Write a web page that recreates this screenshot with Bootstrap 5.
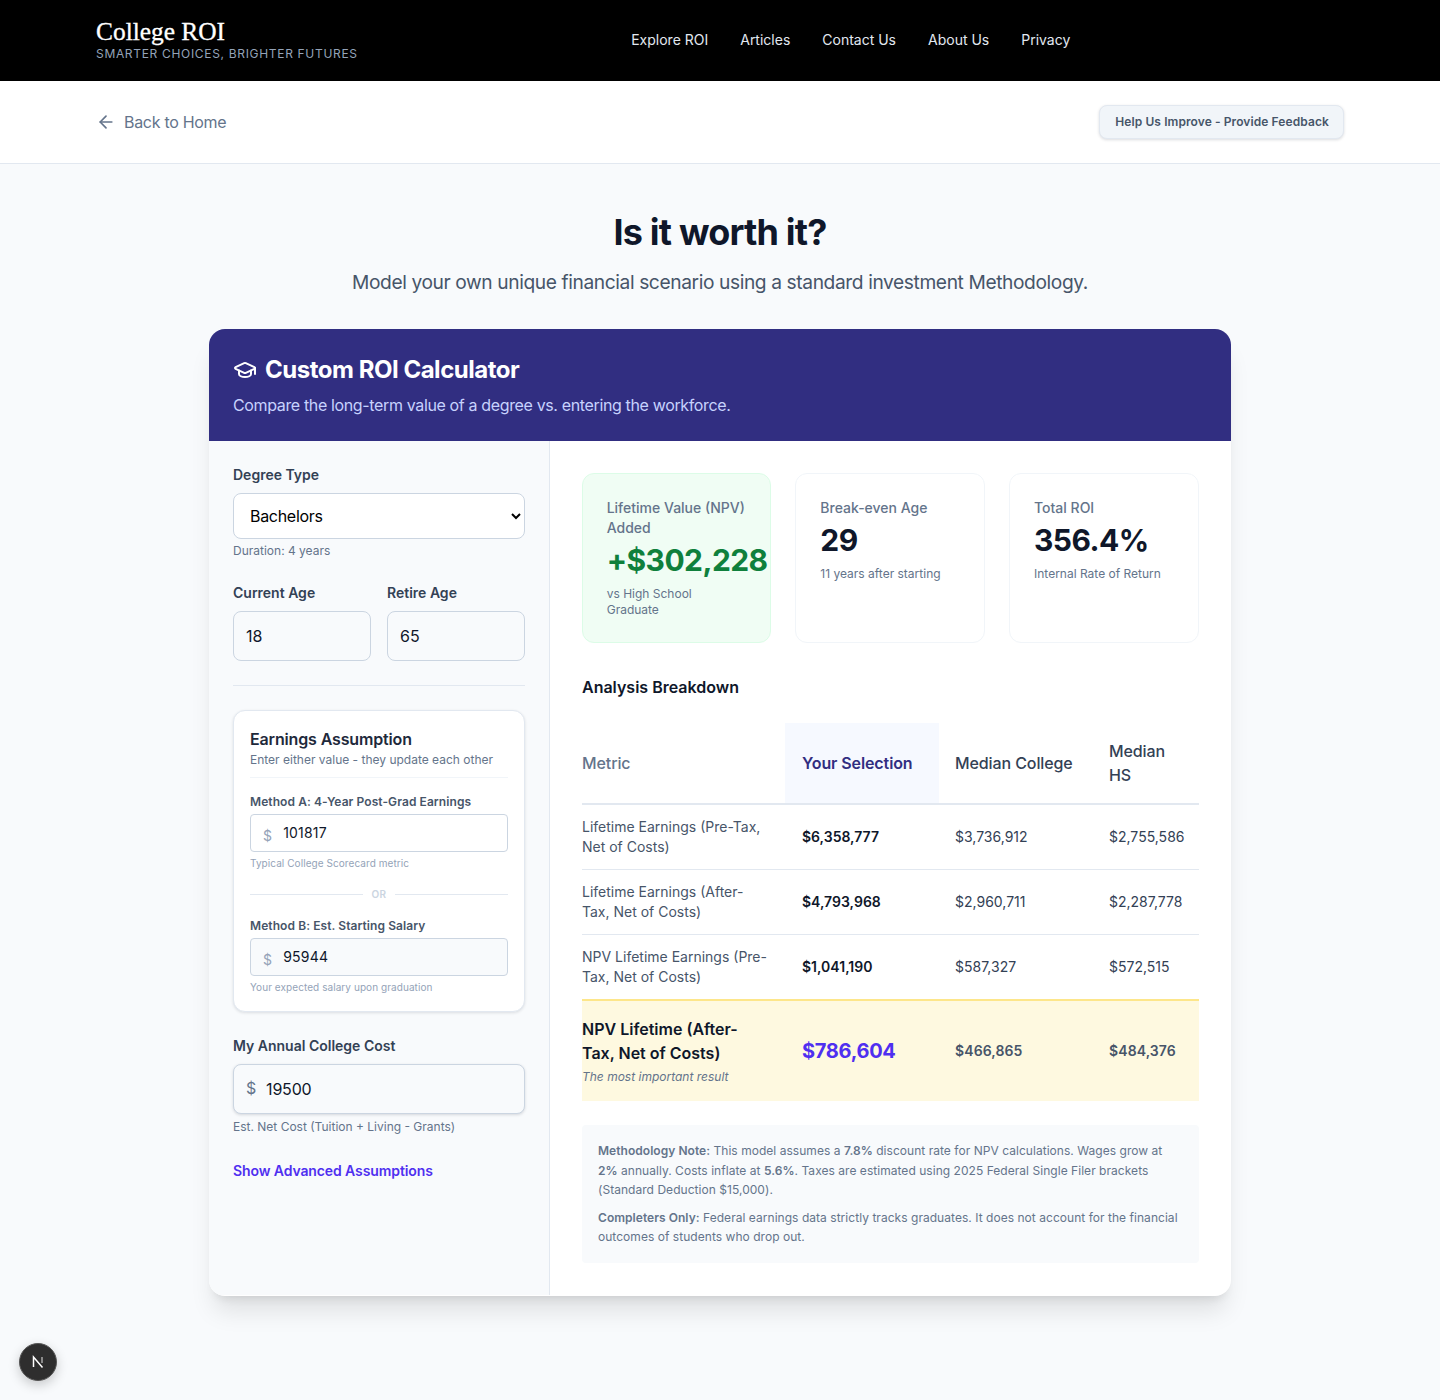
<!DOCTYPE html>
<html lang="en">
<head>
<meta charset="utf-8">
<title>College ROI</title>
<meta name="viewport" content="width=device-width, initial-scale=1">
<link rel="stylesheet" href="https://cdn.jsdelivr.net/npm/bootstrap@5.3.2/dist/css/bootstrap.min.css">
<style>
body { font-family: Inter, "Liberation Sans", sans-serif; background: #f8fafc; color: #0f172a; min-height: 1400px; }
.top-bar { background: #000; height: 81px; padding: 0 96px 1px; }
.brand-name { font-family: "Liberation Serif", serif; font-size: 25.4px; line-height: 30px; color: #fff; font-weight: 500; -webkit-text-stroke: .3px #fff; margin-top: -3px; }
.brand-tag { font-size: 12px; line-height: 16px; letter-spacing: .68px; color: #94a3b8; }
.top-links { gap: 32px; margin-left: 273.5px; padding-bottom: 2px; }
.top-links a { color: #e2e8f0; font-size: 14px; font-weight: 400; text-decoration: none; }
.sub-bar { background: #fff; height: 83px; padding: 0 96px; border-bottom: 1px solid #e2e8f0; }
.back-link { color: #64748b; font-size: 16px; letter-spacing: -.3px; text-decoration: none; gap: 8px; }
.feedback-btn { background: #f1f5f9; color: #475569; border: 1px solid #e2e8f0; border-radius: 8px; font-size: 12px; font-weight: 600; letter-spacing: .09px; height: 34px; padding: 0 14px 0 15px; box-shadow: 0 1px 3px rgba(15,23,42,.15); }
.page-title { font-size: 36px; line-height: 40px; font-weight: 700; letter-spacing: -.8px; color: #0f172a; margin: 48px 0 0; }
.page-sub { font-size: 19.2px; line-height: 28px; letter-spacing: -.4px; color: #475569; margin: 16px 0 33px; }
.calc-card { width: 1022px; height: 967px; margin: 0 auto; background: #fff; border-radius: 16px; overflow: hidden; box-shadow: 0 20px 25px -5px rgba(0,0,0,.1), 0 8px 10px -6px rgba(0,0,0,.1); }
.calc-head { background: #312e81; height: 112px; padding: 24px; color: #fff; }
.calc-title { font-size: 24px; line-height: 32px; font-weight: 700; letter-spacing: -.48px; margin: 1px 0 7px; gap: 8px; }
.calc-desc { font-size: 16px; line-height: 24px; letter-spacing: -.36px; color: #c7d2fe; margin: 0; }
.side-col { width: 341px; background: #f8fafc; border-right: 1px solid #e2e8f0; padding: 24px; }
.main-col { width: 681px; padding: 32px; }
.fld-label { font-size: 14px; line-height: 20px; font-weight: 600; color: #334155; margin-bottom: 8px; display: block; }
.fld-hint { font-size: 12px; line-height: 16px; color: #64748b; margin-top: 4px; }
.fld-select { height: 46px; width: 100%; border: 1px solid #cbd5e1; border-radius: 8px; background: #fff; font-size: 16px; letter-spacing: -.3px; color: #000; padding: 0 12px; }
.fld-input { height: 50px; width: 100%; border: 1px solid #cbd5e1; border-radius: 8px; background: #f8fafc; font-size: 16px; color: #0f172a; padding: 0 12px; }
.side-rule { border-top: 1px solid #e2e8f0; margin: 24px 0; }
.earn-box { background: #fff; border: 1px solid #e2e8f0; border-radius: 12px; padding: 16px; box-shadow: 0 1px 3px rgba(15,23,42,.12); height: 302px; }
.earn-title { font-size: 16px; line-height: 24px; font-weight: 600; letter-spacing: -.15px; color: #1e293b; margin: 0; }
.earn-desc { font-size: 12px; line-height: 16px; color: #64748b; margin-top: 1px; padding-bottom: 9px; border-bottom: 1px solid #f1f5f9; margin-bottom: 16px; }
.earn-label { font-size: 12px; line-height: 16px; font-weight: 600; letter-spacing: .08px; color: #475569; margin-bottom: 4px; display: block; }
.money-box { height: 38px; border: 1px solid #cbd5e1; border-radius: 4px; background: #fff; padding: 0 0 2px 12px; gap: 11px; font-size: 14px; letter-spacing: .2px; color: #0f172a; }
.money-box.muted-box { background: #f8fafc; }
.money-sign { color: #94a3b8; padding-top: 6px; }
.earn-hint { font-size: 10px; line-height: 14px; letter-spacing: .07px; color: #94a3b8; margin-top: 4px; }
.or-row { gap: 8px; margin: 16px 0; font-size: 10px; line-height: 16px; font-weight: 600; letter-spacing: .5px; color: #cbd5e1; }
.or-row::before, .or-row::after { content: ""; flex: 1; border-top: 1px solid #e2e8f0; }
.cost-box { height: 50px; border: 1px solid #cbd5e1; border-radius: 8px; background: #f8fafc; padding-left: 12px; gap: 10px; font-size: 16px; letter-spacing: -.2px; color: #0f172a; box-shadow: 0 1px 3px rgba(15,23,42,.15); }
.cost-box .money-sign { color: #64748b; padding: 0 0 2px; }
.cost-hint { margin-top: 5px; }
.adv-link { color: #4f2ff0; font-size: 14px; line-height: 20px; font-weight: 600; letter-spacing: -.1px; text-decoration: none; display: block; margin-top: 26px; }
.stat-row { gap: 24px; margin: 0 .33px 0 -.33px; }
.stat-box { flex: 1 1 0; height: 170px; border: 1px solid #f1f5f9; border-radius: 12px; padding: 24px 0 0 24px; min-width: 0; }
.stat-box.good { background: #f0fdf4; border-color: #dcfce7; }
.stat-label { font-size: 14px; line-height: 20px; font-weight: 500; color: #64748b; }
.stat-value { font-size: 30px; line-height: 36px; font-weight: 700; letter-spacing: -.55px; color: #0f172a; margin-top: 4px; white-space: nowrap; }
.stat-box.good .stat-value { color: #0f803c; }
.stat-note { font-size: 12px; line-height: 16px; color: #64748b; margin-top: 8px; }
.stat-box.good .stat-note { padding-right: 40px; }
.section-head { font-size: 16px; line-height: 24px; font-weight: 600; color: #0f172a; margin: 32px 0 24px; }
.roi-table { table-layout: fixed; width: 617px; border-collapse: collapse; margin: 0; }
.roi-table th { height: 81px; padding: 0 16px 0 17px; font-size: 16px; line-height: 24px; font-weight: 500; letter-spacing: -.1px; color: #334155; border-bottom: 2px solid #e2e8f0; vertical-align: middle; }
.roi-table th:nth-child(1) { width: 203px; }
.roi-table th:nth-child(2) { width: 154px; }
.roi-table th:nth-child(3) { width: 153px; }
.roi-table th:nth-child(4) { width: 107px; }
.roi-table th:first-child, .roi-table td:first-child { padding-left: 0; }
.roi-table th:first-child { color: #64748b; }
.roi-table th.pick { background: #f6f9ff; color: #312e81; font-weight: 600; }
.roi-table td { height: 65px; padding: 0 16px 0 17px; font-size: 14px; line-height: 20px; color: #334155; border-bottom: 1px solid #e2e8f0; vertical-align: middle; }
.roi-table th:nth-child(3), .roi-table td:nth-child(3) { padding-left: 16px; }
.roi-table td:first-child { color: #475569; }
.roi-table td.pick { font-weight: 600; color: #0f172a; }
.roi-table tr.near-hero td { height: 66px; border-bottom: 0; }
.roi-table tr.hero td { height: 101px; background: #fef9e0; border-top: 2px solid #fde68a; border-bottom: 0; font-weight: 600; letter-spacing: .1px; color: #475569; }
.roi-table tr.hero td:first-child { font-size: 16px; line-height: 24px; letter-spacing: 0; color: #0f172a; padding-right: 16px; }
.roi-table tr.hero td.pick { font-size: 20px; font-weight: 700; letter-spacing: -.3px; color: #4f2ff0; }
.hero-note { display: block; font-size: 12px; line-height: 16px; font-style: italic; font-weight: 400; color: #64748b; margin-top: 4px; }
.method-note { background: #f8fafc; border-radius: 4px; padding: 16px; margin-top: 24px; font-size: 12px; line-height: 19.5px; letter-spacing: .04px; color: #64748b; }
.method-note p { margin: 0 0 8px; }
.method-note p:last-child { margin: 0; }
.method-note strong { font-weight: 600; }
.dev-badge { position: fixed; left: 19px; bottom: 19px; width: 38px; height: 38px; border-radius: 50%; background: #2e2e2e; border: 1px solid #555; box-shadow: 0 4px 12px rgba(0,0,0,.2); }
</style>
</head>
<body>
<header class="top-bar d-flex align-items-center">
  <div>
    <div class="brand-name">College ROI</div>
    <div class="brand-tag">SMARTER CHOICES, BRIGHTER FUTURES</div>
  </div>
  <nav class="top-links d-flex">
    <a href="#">Explore ROI</a>
    <a href="#">Articles</a>
    <a href="#">Contact Us</a>
    <a href="#">About Us</a>
    <a href="#">Privacy</a>
  </nav>
</header>
<div class="sub-bar d-flex align-items-center justify-content-between">
  <a class="back-link d-flex align-items-center" href="#">
    <svg width="20" height="20" viewBox="0 0 24 24" fill="none" stroke="#64748b" stroke-width="2" stroke-linecap="round" stroke-linejoin="round"><path d="M19 12H5"/><path d="M12 19l-7-7 7-7"/></svg>
    Back to Home
  </a>
  <button class="feedback-btn">Help Us Improve - Provide Feedback</button>
</div>
<main>
  <h1 class="page-title text-center">Is it worth it?</h1>
  <p class="page-sub text-center">Model your own unique financial scenario using a standard investment Methodology.</p>
  <section class="calc-card">
    <div class="calc-head">
      <h2 class="calc-title d-flex align-items-center">
        <svg width="24" height="24" viewBox="0 0 24 24" fill="none" stroke="#fff" stroke-width="2" stroke-linecap="round" stroke-linejoin="round"><path d="M21.4 10.9a1 1 0 0 0 0-1.84L12.83 5.2a2 2 0 0 0-1.66 0L2.6 9.1a1 1 0 0 0 0 1.83l8.57 3.9a2 2 0 0 0 1.66 0z"/><path d="M22 10v6"/><path d="M6 12.5V16a6 3 0 0 0 12 0v-3.5"/></svg>
        Custom ROI Calculator
      </h2>
      <p class="calc-desc">Compare the long-term value of a degree vs. entering the workforce.</p>
    </div>
    <div class="d-flex">
      <aside class="side-col">
        <label class="fld-label">Degree Type</label>
        <select class="fld-select"><option>Bachelors</option></select>
        <div class="fld-hint">Duration: 4 years</div>
        <div class="d-flex gap-3 mt-4">
          <div class="flex-fill w-50"><label class="fld-label">Current Age</label><input class="fld-input" value="18"></div>
          <div class="flex-fill w-50"><label class="fld-label">Retire Age</label><input class="fld-input" value="65"></div>
        </div>
        <div class="side-rule"></div>
        <div class="earn-box">
          <h3 class="earn-title">Earnings Assumption</h3>
          <div class="earn-desc">Enter either value - they update each other</div>
          <label class="earn-label">Method A: 4-Year Post-Grad Earnings</label>
          <div class="money-box d-flex align-items-center"><span class="money-sign">$</span><span>101817</span></div>
          <div class="earn-hint">Typical College Scorecard metric</div>
          <div class="or-row d-flex align-items-center">OR</div>
          <label class="earn-label">Method B: Est. Starting Salary</label>
          <div class="money-box muted-box d-flex align-items-center"><span class="money-sign">$</span><span>95944</span></div>
          <div class="earn-hint">Your expected salary upon graduation</div>
        </div>
        <label class="fld-label mt-4">My Annual College Cost</label>
        <div class="cost-box d-flex align-items-center"><span class="money-sign">$</span><span>19500</span></div>
        <div class="fld-hint cost-hint">Est. Net Cost (Tuition + Living - Grants)</div>
        <a class="adv-link" href="#">Show Advanced Assumptions</a>
      </aside>
      <div class="main-col">
        <div class="stat-row d-flex">
          <div class="stat-box good">
            <div class="stat-label">Lifetime Value (NPV) Added</div>
            <div class="stat-value">+$302,228</div>
            <div class="stat-note">vs High School Graduate</div>
          </div>
          <div class="stat-box">
            <div class="stat-label">Break-even Age</div>
            <div class="stat-value">29</div>
            <div class="stat-note">11 years after starting</div>
          </div>
          <div class="stat-box">
            <div class="stat-label">Total ROI</div>
            <div class="stat-value">356.4%</div>
            <div class="stat-note">Internal Rate of Return</div>
          </div>
        </div>
        <h3 class="section-head">Analysis Breakdown</h3>
        <table class="roi-table">
          <thead>
            <tr><th>Metric</th><th class="pick">Your Selection</th><th>Median College</th><th>Median HS</th></tr>
          </thead>
          <tbody>
            <tr><td>Lifetime Earnings (Pre-Tax, Net of Costs)</td><td class="pick">$6,358,777</td><td>$3,736,912</td><td>$2,755,586</td></tr>
            <tr><td>Lifetime Earnings (After-Tax, Net of Costs)</td><td class="pick">$4,793,968</td><td>$2,960,711</td><td>$2,287,778</td></tr>
            <tr class="near-hero"><td>NPV Lifetime Earnings (Pre-Tax, Net of Costs)</td><td class="pick">$1,041,190</td><td>$587,327</td><td>$572,515</td></tr>
            <tr class="hero"><td>NPV Lifetime (After-Tax, Net of Costs)<span class="hero-note">The most important result</span></td><td class="pick">$786,604</td><td>$466,865</td><td>$484,376</td></tr>
          </tbody>
        </table>
        <div class="method-note">
          <p><strong>Methodology Note:</strong> This model assumes a <strong>7.8%</strong> discount rate for NPV calculations. Wages grow at <strong>2%</strong> annually. Costs inflate at <strong>5.6%</strong>. Taxes are estimated using 2025 Federal Single Filer brackets (Standard Deduction $15,000).</p>
          <p><strong>Completers Only:</strong> Federal earnings data strictly tracks graduates. It does not account for the financial outcomes of students who drop out.</p>
        </div>
      </div>
    </div>
  </section>
</main>
<div class="dev-badge d-flex align-items-center justify-content-center">
  <svg width="16" height="16" viewBox="0 0 16 16" fill="none" stroke="#fff" stroke-width="1.5"><path d="M3.5 13V3L12.5 13.5"/><path d="M12 3v6" stroke="#aaa"/></svg>
</div>
<script src="https://cdn.jsdelivr.net/npm/bootstrap@5.3.2/dist/js/bootstrap.bundle.min.js"></script>
</body>
</html>
